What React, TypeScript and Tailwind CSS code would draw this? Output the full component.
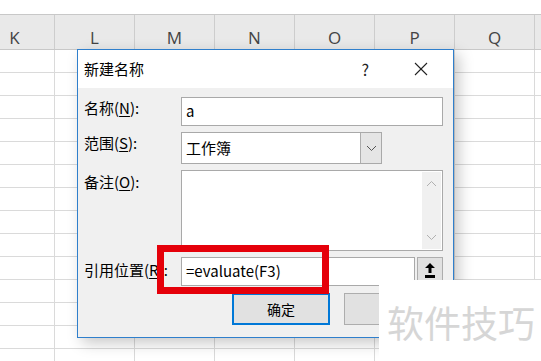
import React from "react";

const COLS = ["K", "L", "M", "N", "O", "P", "Q"];

function Grid() {
  return (
    <div className="flex flex-col">
      <div className="h-[15px] bg-white border-b border-[#c8c8c8]" />
      <div className="h-[35px] bg-[#e9e9e9] border-b border-[#c8c8c8] flex ml-[-25px]">
        {COLS.map((c) => (
          <div
            key={c}
            className="w-[80px] shrink-0 border-r border-[#cdcdcd] flex items-end justify-center text-[17px] leading-[22px] text-[#444]"
            style={{ fontFamily: '"Open Sans", "Noto Sans", sans-serif' }}
          >
            {c}
          </div>
        ))}
      </div>
      {Array.from({ length: 14 }).map((_, r) => (
        <div key={r} className="h-[23px] border-b border-[#dadada] flex ml-[-25px]">
          {COLS.map((c) => (
            <div key={c} className="w-[80px] shrink-0 border-r border-[#dadada]" />
          ))}
        </div>
      ))}
    </div>
  );
}

function U({ children }: { children: React.ReactNode }) {
  return <span className="underline underline-offset-[2px] decoration-1">{children}</span>;
}

function Chevron({ dir, color }: { dir: "up" | "down"; color: string }) {
  return (
    <svg width="11" height="7" viewBox="0 0 11 7">
      {dir === "down" ? (
        <polyline points="1,1 5.5,5.5 10,1" fill="none" stroke={color} strokeWidth="1" />
      ) : (
        <polyline points="1,6 5.5,1.5 10,6" fill="none" stroke={color} strokeWidth="1" />
      )}
    </svg>
  );
}

function Dialog() {
  const font = { fontFamily: '"Noto Sans CJK SC", "Noto Sans", sans-serif' };
  return (
    <div
      className="absolute left-[77px] top-[49px] w-[377px] h-[289px] border border-[#2f7fcc] bg-[#f0f0f0] shadow-[5px_5px_14px_rgba(0,0,0,0.22)] flex flex-col text-black"
      style={font}
    >
      <div className="h-[38px] bg-white flex items-center pl-[6px] pr-[25px]">
        <span className="text-[15px] leading-[20px]">新建名称</span>
        <span className="ml-auto text-[16px] leading-[20px] text-[#222] mr-[45px]">?</span>
        <svg width="14" height="14" viewBox="0 0 14 14">
          <line x1="1" y1="1" x2="13" y2="13" stroke="#222" strokeWidth="1.1" />
          <line x1="13" y1="1" x2="1" y2="13" stroke="#222" strokeWidth="1.1" />
        </svg>
      </div>
      <div className="flex flex-col pl-[6px] pr-[10px] text-[15px]">
        <div className="flex items-start mt-[9px]">
          <div className="w-[97px] pt-[1px] leading-[20px]">
            名称(<U>N</U>):
          </div>
          <div className="flex-1 h-[29px] bg-white border border-[#a9a9a9] flex items-center pl-[4px] text-[15px]">
            a
          </div>
        </div>
        <div className="flex items-start mt-[6px]">
          <div className="w-[97px] pt-[1px] leading-[20px]">
            范围(<U>S</U>):
          </div>
          <div className="w-[201px] h-[32px] bg-white border border-[#a9a9a9] flex">
            <div className="flex-1 flex items-center pl-[4px] text-[15px]">工作簿</div>
            <div className="w-[21px] bg-[#e5e5e5] border-l border-[#adadad] flex items-center justify-center">
              <Chevron dir="down" color="#555" />
            </div>
          </div>
        </div>
        <div className="flex items-start mt-[6px]">
          <div className="w-[97px] pt-[2px] leading-[20px]">
            备注(<U>O</U>):
          </div>
          <div className="flex-1 h-[81px] bg-white border border-[#a9a9a9] flex justify-end">
            <div className="w-[19px] mr-[1px] my-[1px] bg-[#f0f0f0] flex flex-col items-center justify-between py-[8px]">
              <Chevron dir="up" color="#b0b0b0" />
              <Chevron dir="down" color="#b0b0b0" />
            </div>
          </div>
        </div>
        <div className="flex items-start mt-[6px]">
          <div className="w-[97px] pt-[3px] leading-[20px] whitespace-nowrap">
            引用位置(<U>R</U>):
          </div>
          <div className="flex-1 flex gap-[2px]">
            <div className="flex-1 h-[29px] bg-white border border-[#a9a9a9] flex items-center pl-[4px] text-[15px]">
              =evaluate(F3)
            </div>
            <div className="w-[26px] h-[29px] bg-[#e1e1e1] border border-[#adadad] flex items-start justify-center pt-[5px]">
              <svg width="12" height="16" viewBox="0 0 12 16">
                <polygon points="6,0 11,5 7.5,5 7.5,10 4.5,10 4.5,5 1,5" fill="#000" />
                <rect x="1" y="12" width="10" height="3" fill="#000" />
              </svg>
            </div>
          </div>
        </div>
        <div className="flex justify-end gap-[14px] mt-[7px] mr-[1px]">
          <div className="w-[98px] h-[32px] bg-[#e1e1e1] border-2 border-[#0078d7] flex items-center justify-center text-[14px]">
            确定
          </div>
          <div className="w-[98px] h-[32px] bg-[#e1e1e1] border border-[#adadad] flex items-center justify-center text-[14px]">
            取消
          </div>
        </div>
      </div>
    </div>
  );
}

export default function App() {
  return (
    <div className="relative w-[541px] h-[361px] overflow-hidden bg-white">
      <Grid />
      <Dialog />
      <div className="absolute left-[157px] top-[245px] w-[172px] h-[49px] border-[7px] border-[#e5000a]" />
      <div className="absolute left-[379px] top-[280px] w-[162px] h-[81px] bg-white flex items-center pl-[8px]">
        <span
          className="text-[37px] leading-[40px] text-[#d6d6d6] mt-[2px]"
          style={{ fontFamily: '"Noto Sans CJK SC", sans-serif' }}
        >
          软件技巧
        </span>
      </div>
    </div>
  );
}
